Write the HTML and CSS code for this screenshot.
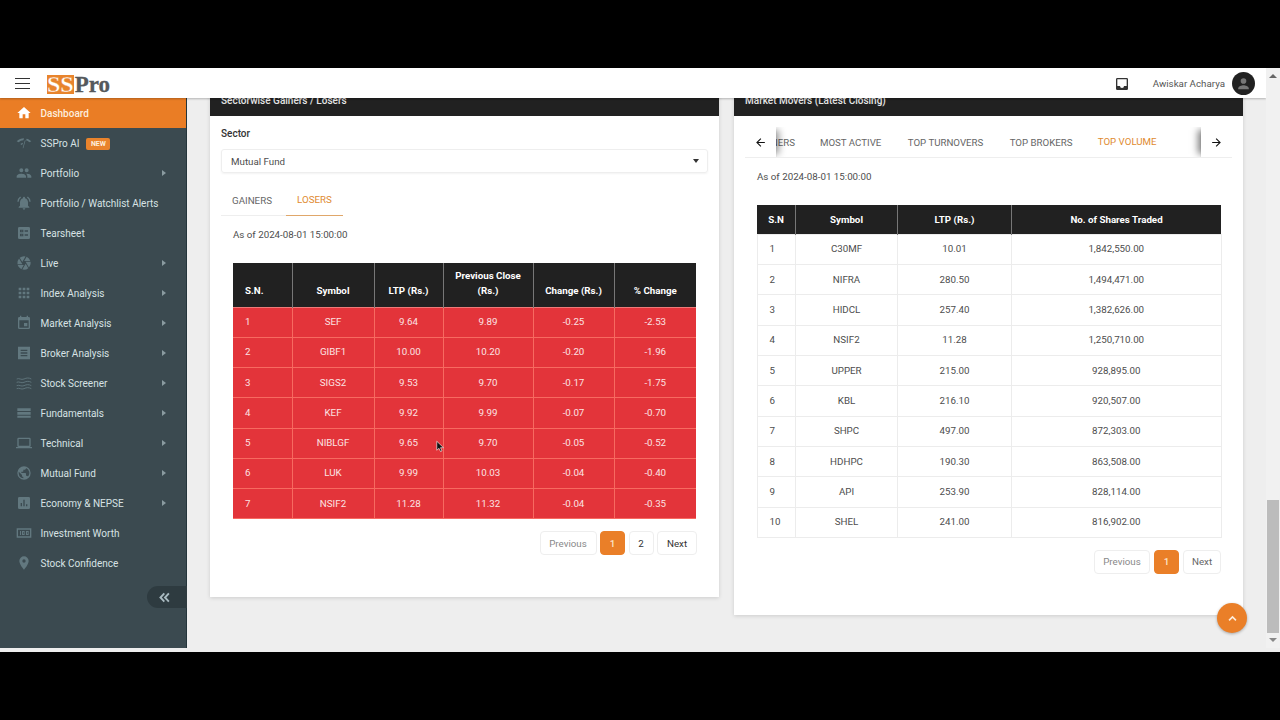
FILE: index.html
```html
<!DOCTYPE html>
<html lang="en">
<head>
<meta charset="utf-8">
<title>SSPro Dashboard</title>
<link rel="stylesheet" href="styles.css">
</head>
<body>
<div class="app">
  <div class="window">
    <header class="topbar">
      <button class="burger" aria-label="Menu"><span></span><span></span><span></span></button>
      <div class="logo"><span class="logo-ss">SS</span><span class="logo-pro">Pro</span></div>
      <div class="topbar-right">
        <svg class="inbox" viewBox="0 0 24 24"><path d="M19 3H5a2 2 0 0 0-2 2v14a2 2 0 0 0 2 2h14a2 2 0 0 0 2-2V5a2 2 0 0 0-2-2zm0 12h-4a3 3 0 0 1-6 0H5V5h14v10z"/></svg>
        <span class="username">Awiskar Acharya</span>
        <span class="avatar"><svg viewBox="0 0 24 24"><circle cx="12" cy="8.5" r="4"/><path d="M4.5 19c0-3.2 5-4.6 7.500-4.600s7.500 1.400 7.500 4.600v1h-15z"/></svg></span>
      </div>
    </header>
    <div class="body">
      <nav class="sidebar">
        <a class="nav active"><svg class="ic" viewBox="0 0 24 24"><path d="M10 20v-6h4v6h5v-8h3L12 3 2 12h3v8z"/></svg><span>Dashboard</span></a>
        <a class="nav"><svg class="ic" viewBox="0 0 24 24"><path d="M1 9.500C4 6.500 8 5 12 5l-.8 3C8.500 8.200 6 9.200 4 11zM23 9.500C21 7.500 18.500 6 16 5.500L15 8c2 .4 3.600 1.400 5 3zM13 8.500l1.500-1L11 20l-1-.3zM6.500 13.500c1.200-1 2.500-1.700 4-2l-.5 2.400c-.7.200-1.300.6-1.800 1.100z"/></svg><span>SSPro AI</span><em class="badge">NEW</em></a>
        <a class="nav"><svg class="ic" viewBox="0 0 24 24"><path d="M16 11a3 3 0 1 0 0-6 3 3 0 0 0 0 6zm-8 0a3 3 0 1 0 0-6 3 3 0 0 0 0 6zm0 2c-2.500 0-7 1.200-7 3.700V19h14v-2.300C15 14.200 10.500 13 8 13zm8 0h-1c1.200.9 2 2.100 2 3.700V19h6v-2.300c0-2.500-4.500-3.700-7-3.700z"/></svg><span>Portfolio</span><i class="caret"></i></a>
        <a class="nav"><svg class="ic" viewBox="0 0 24 24"><path d="M12 22a2 2 0 0 0 2-2h-4a2 2 0 0 0 2 2zm6-6v-5c0-3-1.700-5.600-4.500-6.300V4a1.500 1.500 0 0 0-3 0v.7C7.700 5.400 6 8 6 11v5l-2 2v1h16v-1zM7.600 3.600 6.200 2.200A10.400 10.400 0 0 0 2 10h2a8.400 8.400 0 0 1 3.600-6.400zM20 10h2a10.400 10.400 0 0 0-4.200-7.800l-1.400 1.400A8.400 8.400 0 0 1 20 10z"/></svg><span>Portfolio / Watchlist Alerts</span></a>
        <a class="nav"><svg class="ic" viewBox="0 0 24 24"><path d="M19 3H5a2 2 0 0 0-2 2v14a2 2 0 0 0 2 2h14a2 2 0 0 0 2-2V5a2 2 0 0 0-2-2zM11 17H6v-4h5zm0-6H6V7h5zm7 5h-5v-2h5zm0-6h-5V8h5zM7.500 8.500v1h2v-1zm0 6v1h2v-1z" fill-rule="evenodd"/></svg><span>Tearsheet</span></a>
        <a class="nav"><svg class="ic" viewBox="0 0 24 24"><path d="M9.400 10.500 14.200 2.200A10 10 0 0 0 12 2a10 10 0 0 0-6.400 2.300zM21.500 9A10 10 0 0 0 16 2.800L12.300 9zM21.800 10H14.300l.3.500 4.800 8.200A10 10 0 0 0 22 12c0-.7-.1-1.300-.2-2zM8.500 12 4.600 5.200A10 10 0 0 0 2.200 14h7.500zM2.500 15a10 10 0 0 0 5.500 6.200L11.700 15zM13.400 15l-3.900 6.800c.8.200 1.600.2 2.500.2a10 10 0 0 0 6.400-2.300L14.600 13z"/></svg><span>Live</span><i class="caret"></i></a>
        <a class="nav"><svg class="ic" viewBox="0 0 24 24"><path d="M4 4h4v4H4zm6 0h4v4h-4zm6 0h4v4h-4zM4 10h4v4H4zm6 0h4v4h-4zm6 0h4v4h-4zM4 16h4v4H4zm6 0h4v4h-4zm6 0h4v4h-4z"/></svg><span>Index Analysis</span><i class="caret"></i></a>
        <a class="nav"><svg class="ic" viewBox="0 0 24 24"><path d="M17 12h-5v5h5zM16 1v2H8V1H6v2H5a2 2 0 0 0-2 2v14a2 2 0 0 0 2 2h14a2 2 0 0 0 2-2V5a2 2 0 0 0-2-2h-1V1zm3 18H5V8h14z"/></svg><span>Market Analysis</span><i class="caret"></i></a>
        <a class="nav"><svg class="ic" viewBox="0 0 24 24"><path d="M3 2.500v19h18v-19zM7 7h10v2H7zm0 4h10v2H7zm0 4h10v2H7z" fill-rule="evenodd"/></svg><span>Broker Analysis</span><i class="caret"></i></a>
        <a class="nav"><svg class="ic wave" viewBox="0 0 24 24"><path d="M1 6c3.500-2 7 2 11 0s7.500-2 11 0M1 11c3.500-2 7 2 11 0s7.500-2 11 0M1 16c3.500-2 7 2 11 0s7.500-2 11 0M1 20.500c3.500-2 7 2 11 0s7.500-2 11 0"/></svg><span>Stock Screener</span><i class="caret"></i></a>
        <a class="nav"><svg class="ic" viewBox="0 0 24 24"><path d="M2 5h20v4H2zm0 5.500h20v4H2zM2 16h20v3H2z"/></svg><span>Fundamentals</span><i class="caret"></i></a>
        <a class="nav"><svg class="ic" viewBox="0 0 24 24"><path d="M20 18a2 2 0 0 0 2-2V6a2 2 0 0 0-2-2H4a2 2 0 0 0-2 2v10a2 2 0 0 0 2 2H0v2h24v-2zM4 6h16v10H4z"/></svg><span>Technical</span><i class="caret"></i></a>
        <a class="nav"><svg class="ic" viewBox="0 0 24 24"><path d="M12 2a10 10 0 1 0 0 20 10 10 0 0 0 0-20zM4 12c0-.6.100-1.200.2-1.800L9 15v1a2 2 0 0 0 2 2v1.900A8 8 0 0 1 4 12zm13.900 5.400A2 2 0 0 0 16 16h-1v-3a1 1 0 0 0-1-1H8v-2h2a1 1 0 0 0 1-1V7h2a2 2 0 0 0 2-2v-.4a8 8 0 0 1 2.900 12.800z"/></svg><span>Mutual Fund</span><i class="caret"></i></a>
        <a class="nav"><svg class="ic" viewBox="0 0 24 24"><path d="M19 3H5a2 2 0 0 0-2 2v14a2 2 0 0 0 2 2h14a2 2 0 0 0 2-2V5a2 2 0 0 0-2-2zM9 17H7v-5h2zm4 0h-2V7h2zm4 0h-2v-3h2z" fill-rule="evenodd"/></svg><span>Economy &amp; NEPSE</span><i class="caret"></i></a>
        <a class="nav"><svg class="ic" viewBox="0 0 24 24"><path d="M1 5v14h22V5zm2 2h18v10H3zM6 9v6h1.500V9zm3 0v6h4V9zm1.500 1.500h1v3h-1zM15 9v6h4V9zm1.500 1.500h1v3h-1z" fill-rule="evenodd"/></svg><span>Investment Worth</span></a>
        <a class="nav"><svg class="ic" viewBox="0 0 24 24"><path d="M12 2a7 7 0 0 0-7 7c0 5.200 7 13 7 13s7-7.800 7-13a7 7 0 0 0-7-7zm0 9.500a2.500 2.500 0 1 1 0-5 2.500 2.500 0 0 1 0 5z"/></svg><span>Stock Confidence</span></a>
        <button class="collapse" aria-label="Collapse"><svg viewBox="0 0 24 24"><path d="M11.700 5.500 5.500 12l6.200 6.500M19 5.500 12.800 12l6.200 6.500"/></svg></button>
      </nav>
      <main class="content">
        <section class="card card-left">
          <h2 class="card-title">Sectorwise Gainers / Losers</h2>
          <div class="card-body">
            <label class="field-label">Sector</label>
            <div class="select"><span>Mutual Fund</span><i class="select-caret"></i></div>
            <div class="tabs tabs-left">
              <span class="tab">GAINERS</span>
              <span class="tab on">LOSERS</span>
            </div>
            <p class="asof asof-left">As of 2024-08-01 15:00:00</p>
            <table class="tbl red">
              <colgroup><col class="l1"><col class="l2"><col class="l3"><col class="l4"><col class="l5"><col class="l6"></colgroup>
              <thead><tr><th class="first">S.N.</th><th>Symbol</th><th>LTP (Rs.)</th><th>Previous Close<br>(Rs.)</th><th>Change (Rs.)</th><th>% Change</th></tr></thead>
              <tbody>
                <tr><td class="first">1</td><td>SEF</td><td>9.64</td><td>9.89</td><td>-0.25</td><td>-2.53</td></tr>
                <tr><td class="first">2</td><td>GIBF1</td><td>10.00</td><td>10.20</td><td>-0.20</td><td>-1.96</td></tr>
                <tr><td class="first">3</td><td>SIGS2</td><td>9.53</td><td>9.70</td><td>-0.17</td><td>-1.75</td></tr>
                <tr><td class="first">4</td><td>KEF</td><td>9.92</td><td>9.99</td><td>-0.07</td><td>-0.70</td></tr>
                <tr><td class="first">5</td><td>NIBLGF</td><td>9.65</td><td>9.70</td><td>-0.05</td><td>-0.52</td></tr>
                <tr><td class="first">6</td><td>LUK</td><td>9.99</td><td>10.03</td><td>-0.04</td><td>-0.40</td></tr>
                <tr><td class="first">7</td><td>NSIF2</td><td>11.28</td><td>11.32</td><td>-0.04</td><td>-0.35</td></tr>
              </tbody>
            </table>
            <div class="pager"><span class="pg muted">Previous</span><span class="pg cur">1</span><span class="pg num">2</span><span class="pg next">Next</span></div>
          </div>
        </section>
        <section class="card card-right">
          <h2 class="card-title">Market Movers (Latest Closing)</h2>
          <div class="card-body">
            <div class="tabs tabs-right">
              <div class="tab-track">
                <span class="tab cut">GAINERS</span>
                <span class="tab">MOST ACTIVE</span>
                <span class="tab">TOP TURNOVERS</span>
                <span class="tab">TOP BROKERS</span>
                <span class="tab on">TOP VOLUME</span>
              </div>
              <span class="scroll-btn sb-left"><svg viewBox="0 0 24 24"><path d="M20 11H7.800l5.600-5.600L12 4l-8 8 8 8 1.400-1.400L7.800 13H20z"/></svg></span>
              <span class="scroll-btn sb-right"><svg viewBox="0 0 24 24"><path d="m12 4-1.400 1.400 5.600 5.600H4v2h12.200l-5.600 5.600L12 20l8-8z"/></svg></span>
            </div>
            <p class="asof asof-right">As of 2024-08-01 15:00:00</p>
            <table class="tbl plain">
              <colgroup><col class="r1"><col class="r2"><col class="r3"><col class="r4"></colgroup>
              <thead><tr><th>S.N</th><th>Symbol</th><th>LTP (Rs.)</th><th>No. of Shares Traded</th></tr></thead>
              <tbody>
                <tr><td class="first">1</td><td>C30MF</td><td>10.01</td><td>1,842,550.00</td></tr>
                <tr><td class="first">2</td><td>NIFRA</td><td>280.50</td><td>1,494,471.00</td></tr>
                <tr><td class="first">3</td><td>HIDCL</td><td>257.40</td><td>1,382,626.00</td></tr>
                <tr><td class="first">4</td><td>NSIF2</td><td>11.28</td><td>1,250,710.00</td></tr>
                <tr><td class="first">5</td><td>UPPER</td><td>215.00</td><td>928,895.00</td></tr>
                <tr><td class="first">6</td><td>KBL</td><td>216.10</td><td>920,507.00</td></tr>
                <tr><td class="first">7</td><td>SHPC</td><td>497.00</td><td>872,303.00</td></tr>
                <tr><td class="first">8</td><td>HDHPC</td><td>190.30</td><td>863,508.00</td></tr>
                <tr><td class="first">9</td><td>API</td><td>253.90</td><td>828,114.00</td></tr>
                <tr><td class="first">10</td><td>SHEL</td><td>241.00</td><td>816,902.00</td></tr>
              </tbody>
            </table>
            <div class="pager pager-right"><span class="pg muted">Previous</span><span class="pg cur">1</span><span class="pg next-muted">Next</span></div>
          </div>
        </section>
        <button class="to-top" aria-label="Back to top"><svg viewBox="0 0 24 24"><path d="M6.500 15 12 9.500l5.500 5.500"/></svg></button>
        <svg class="cursor" viewBox="0 0 12 16"><path d="M1 1v12l3-2.600 2 4.300 2-.9-2-4.200h4z"/></svg>
      </main>
      <div class="scrollbar">
        <i class="sb-up"></i>
        <div class="sb-track"><div class="sb-thumb"></div></div>
        <i class="sb-down"></i>
      </div>
    </div>
  </div>
</div>
</body>
</html>
```
FILE: styles.css
```css
* { box-sizing: border-box; }
html, body { margin: 0; padding: 0; height: 100%; background: #000; overflow: hidden; }
body { font-family: Roboto, "Liberation Sans", sans-serif; font-size: 9.750px; color: #4b4b4b; }
.app { height: 720px; padding-top: 68px; }
.window { height: 584px; display: flex; flex-direction: column; background: #eee; }

.topbar { height: 30px; flex: none; width: 1266px; background: #fff; display: flex; align-items: center; padding-left: 15px; position: relative; z-index: 3; box-shadow: 0 1px 2px rgba(0,0,0,.25); }
.burger { border: 0; background: none; padding: 0; width: 15px; height: 11px; display: flex; flex-direction: column; justify-content: space-between; }
.burger span { display: block; height: 1px; background: #333; }
.logo { margin: 3px 0 0 17px; display: flex; align-items: center; font-family: "Liberation Serif", serif; font-weight: 700; font-size: 24px; line-height: 22px; }
.logo-ss { color: #fff; background: #e8842c; height: 19px; line-height: 19px; margin-top: -1px; -webkit-text-stroke: .3px #e8842c; }
.logo-pro { color: #55595c; font-size: 23px; margin-left: 1px; -webkit-text-stroke: .3px #55595c; }
.topbar-right { margin-left: auto; display: flex; align-items: center; padding-right: 11px; }
.inbox { width: 16px; height: 16px; fill: #333; margin-right: 23px; margin-top: 2px; }
.username { font-size: 9.750px; color: #555; margin-right: 7px; }
.avatar { width: 23px; height: 23px; border-radius: 50%; background: #212121; display: flex; align-items: center; justify-content: center; }
.avatar svg { width: 17px; height: 17px; fill: #777; }

.body { flex: 1; display: flex; min-height: 0; }
.sidebar { width: 187px; height: 550px; flex: none; background: #3b4a50; position: relative; border-right: 1px solid #24353b; }
.nav { display: flex; align-items: center; height: 30px; padding-left: 16px; color: #d7e2e4; font-size: 10px; }
.nav .ic { width: 16px; height: 16px; fill: #62787f; margin-right: 8.500px; flex: none; }
.nav .wave { fill: none; stroke: #62787f; stroke-width: 1.300; }
.nav.active { background: #ea7d25; color: #fdeedd; font-weight: 500; }
.nav.active .ic { fill: #fff; }
.badge { font-style: normal; font-size: 7px; font-weight: 700; color: #fdeedd; background: #e9832c; border-radius: 2px; padding: 2px 4.500px; margin: 1px 0 0 7px; line-height: 8px; }
.caret { margin-left: auto; margin-right: 20px; width: 0; height: 0; border-left: 4px solid #8a9ba0; border-top: 3.500px solid transparent; border-bottom: 3.500px solid transparent; }
.collapse { position: absolute; right: -1px; top: 488px; width: 40px; height: 22px; border: 0; border-radius: 11px 0 0 11px; background: #2e3b40; padding: 0 6px 0 0; display: flex; align-items: center; justify-content: center; }
.collapse svg { width: 15px; height: 15px; fill: none; stroke: #a9bac0; stroke-width: 3; }

.content { flex: 1; height: 553px; display: flex; align-items: flex-start; gap: 15px; padding-left: 23px; position: relative; overflow: hidden; }
.card { width: 509px; flex: none; background: #fff; box-shadow: 0 1px 4px rgba(0,0,0,.14); margin-top: -10px; }
.card-left { height: 509px; }
.card-right { height: 527px; }
.card-title { margin: 0; height: 28px; background: #212121; color: #e6e6e6; font-size: 10px; font-weight: 500; padding: 6px 11px 0; line-height: 14px; }
.card-body { padding: 0 11px; }
.field-label { display: block; font-weight: 500; color: #333; font-size: 10px; line-height: 14px; padding-top: 11px; }
.select { height: 24px; margin-top: 8px; border: 1px solid #eee; border-radius: 3px; display: flex; align-items: center; justify-content: space-between; padding: 0 8px 0 9px; color: #4d4d4d; box-shadow: 0 1px 2px rgba(0,0,0,.05); }
.select-caret { width: 0; height: 0; border-top: 4px solid #333; border-left: 3px solid transparent; border-right: 3px solid transparent; }

.tabs { display: flex; color: #666; }
.tab { display: flex; align-items: center; white-space: nowrap; }
.tab.on { color: #e08a30; border-bottom: 1px solid #e0a76a; }
.tabs-left { margin-top: 12px; height: 31px; width: 122px; border-bottom: 1px solid #eee; }
.tabs-left .tab { padding: 0 11px 1px; height: 31px; }
.tabs-left .tab + .tab { margin-left: 3px; padding: 0 0 1px; width: 57px; justify-content: center; }
.asof { margin: 0; color: #4d4d4d; line-height: 14px; }
.asof-left { padding: 12px 0 0 12px; }

.tbl { border-collapse: collapse; table-layout: fixed; }
.tbl th { background: #212121; color: #fff; font-weight: 700; font-size: 9.750px; line-height: 15px; text-align: center; }
.tbl td { text-align: center; line-height: 14px; }
.red { margin: 21px 0 0 12px; width: 463px; }
.red th { height: 44px; vertical-align: bottom; padding: 0 4px 8.500px; border: 1px solid #777; border-width: 0 1px; }
.red th:first-child, .red td:first-child { border-left: 0; }
.red th:last-child, .red td:last-child { border-right: 0; }
.red th.first { text-align: left; padding-left: 12px; }
.red td { height: 30.250px; background: #e3343a; color: #fbe3e3; border: 1px solid #f76a60; border-top: 1px solid #ee7a78; padding: 0; }
.red td.first, .plain td.first { text-align: left; padding-left: 12px; }
.l1 { width: 59px; } .l2 { width: 82px; } .l3 { width: 69px; } .l4 { width: 90px; } .l5 { width: 81px; } .l6 { width: 82px; }

.pager { display: flex; justify-content: flex-end; gap: 3.500px; margin-top: 12px; padding-right: 10px; width: 486px; }
.pg { height: 24px; padding: 0; display: flex; align-items: center; justify-content: center; border: 1px solid #eee; border-radius: 4px; color: #333; }
.muted { color: #888; width: 57px; }
.cur { background: #ea7f28; border-color: #ea7f28; color: #fbe3c9; width: 25px; font-weight: 500; }
.num { width: 25px; }
.next { width: 40px; }
.next-muted { color: #666; width: 38px; }

.tabs-right { margin-top: 11px; width: 487px; height: 31px; border-bottom: 1px solid #eee; position: relative; overflow: hidden; }
.tab-track { display: flex; margin-left: 61.800px; height: 30px; position: relative; flex: 1; }
.tabs-right .tab { padding: 0 13.200px 1px; height: 31px; font-size: 9.700px; }
.tabs-right .tab.cut { position: absolute; right: 100%; padding: 0 11.800px 1px 0; }
.tabs-right .tab.on { padding: 0 0 1px; width: 81px; justify-content: center; margin-left: 1px; }
.scroll-btn { position: absolute; top: 0; height: 30px; background: #fff; display: flex; align-items: center; justify-content: center; }
.scroll-btn svg { width: 13px; height: 13px; fill: #111; }
.sb-left { left: 0; width: 31px; box-shadow: 6px 0 7px -3px rgba(0,0,0,.4), 0 2px 2px -1px rgba(0,0,0,.45); }
.sb-right { right: 0; width: 31px; box-shadow: -6px 0 7px -3px rgba(0,0,0,.5), 0 2px 2px -1px rgba(0,0,0,.45); }
.asof-right { padding: 12px 0 0 12px; }

.plain { margin: 21px 0 0 11.500px; width: 464px; }
.plain th { height: 29px; padding-bottom: 1px; border-left: 1px solid #777; }
.plain th:first-child { border-left: 0; }
.plain td { height: 30.350px; border: 1px solid #ececec; color: #4d4d4d; padding: 0; }
.r1 { width: 38.500px; } .r2 { width: 102px; } .r3 { width: 114px; } .r4 { width: 209.500px; }
.pager-right { margin-top: 12px; padding-right: 11px; gap: 4px; width: 487px; }
.pager-right .muted { width: 56px; }

.to-top { position: absolute; left: 1030px; top: 505px; width: 30px; height: 30px; border: 0; border-radius: 50%; padding: 0; background: #ea7f28; box-shadow: 0 1px 3px rgba(0,0,0,.3); display: flex; align-items: center; justify-content: center; }
.to-top svg { width: 15px; height: 15px; fill: none; stroke: #fdeedd; stroke-width: 2.500; }
.cursor { position: absolute; left: 249px; top: 342px; width: 9px; height: 13px; fill: #111; stroke: #fff; stroke-width: .8; }

.scrollbar { width: 14px; height: 580px; flex: none; margin-top: -30px; position: relative; z-index: 4; background: #f1f1f1; display: flex; flex-direction: column; align-items: center; }
.sb-up { margin-top: 6px; width: 0; height: 0; border-bottom: 4px solid #666; border-left: 4px solid transparent; border-right: 4px solid transparent; }
.sb-track { flex: 1; width: 100%; display: flex; align-items: flex-end; padding: 0 1px; }
.sb-thumb { width: 100%; height: 133px; background: #bcbcbc; margin-bottom: 5px; }
.sb-down { margin-bottom: 6px; width: 0; height: 0; border-top: 4px solid #888; border-left: 4px solid transparent; border-right: 4px solid transparent; }
```
